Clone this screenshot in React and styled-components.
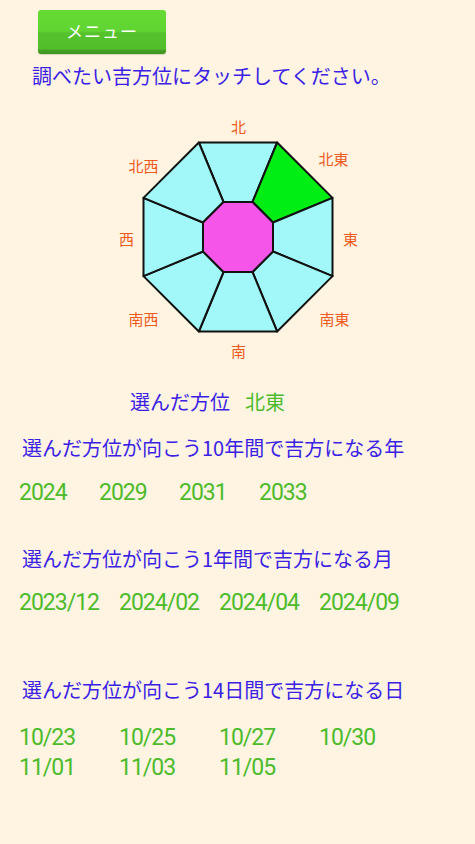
import React from "react"
import styled, { createGlobalStyle } from "styled-components"

const GlobalStyle = createGlobalStyle`
  html, body {
    margin: 0;
    padding: 0;
    background: #fff4e2;
  }
  body {
    font-family: "Noto Sans CJK JP", "Noto Sans", sans-serif;
  }
`

const Page = styled.div`
  width: 475px;
  min-height: 844px;
  background: #fff4e2;
  padding-top: 10px;
  box-sizing: border-box;
`

const MenuButton = styled.button`
  display: block;
  margin-left: 38px;
  width: 128px;
  height: 44px;
  border: none;
  border-radius: 3px;
  padding: 0 0 3px 0;
  background: linear-gradient(
    to bottom,
    #66da34 0%,
    #60d532 48%,
    #55c22d 52%,
    #52be2b 88%,
    #449f22 92%,
    #3f9420 100%
  );
  box-shadow: 0 1px 1px rgba(0, 0, 0, 0.15);
  color: #ffffff;
  font-family: "Noto Sans CJK JP", sans-serif;
  font-size: 17px;
  letter-spacing: 1px;
  cursor: pointer;
`

const Instruction = styled.p`
  margin: 10px 0 0 32px;
  font-size: 20px;
  line-height: 24px;
  color: #3a1fe4;
`

const CompassBox = styled.div`
  width: 260px;
  height: 256px;
  margin: 24px auto 0;
`

const Label = styled.text`
  font-family: "Noto Sans CJK JP", sans-serif;
  font-size: 15px;
  fill: #ee5a1c;
`

const SelectedRow = styled.div`
  display: flex;
  margin-top: 20px;
  padding-left: 130px;
  font-size: 20px;
  line-height: 28px;
  color: #3a1fe4;
`

const SelectedValue = styled.span`
  margin-left: 15px;
  color: #4cbb2c;
`

const Heading = styled.div`
  margin-top: ${(p) => p.$gap}px;
  padding-left: 22px;
  font-size: 20px;
  line-height: 28px;
  color: #3a1fe4;
`

const ValueGrid = styled.div`
  display: grid;
  grid-template-columns: repeat(4, ${(p) => p.$col}px);
  margin-top: ${(p) => p.$gap}px;
  padding-left: 19px;
  font-family: Roboto, "Noto Sans", sans-serif;
  font-size: 23px;
  letter-spacing: -1px;
  line-height: ${(p) => p.$line}px;
  color: #4cbb2c;
`

const directions = [
  { name: "北", fill: "#a2f8f8", lx: 0.5, ly: -111 },
  { name: "北東", fill: "#00ee14", lx: 95.5, ly: -79 },
  { name: "東", fill: "#a2f8f8", lx: 112.5, ly: 1 },
  { name: "南東", fill: "#a2f8f8", lx: 96.5, ly: 81 },
  { name: "南", fill: "#a2f8f8", lx: 0.5, ly: 113 },
  { name: "南西", fill: "#a2f8f8", lx: -94.5, ly: 81 },
  { name: "西", fill: "#a2f8f8", lx: -111.5, ly: 1 },
  { name: "北西", fill: "#a2f8f8", lx: -94.5, ly: -72 },
]

const pt = (r, deg) => {
  const a = (deg * Math.PI) / 180
  return [r * Math.sin(a), -r * Math.cos(a)]
}

function Compass() {
  const cx = 130
  const cy = 125
  const outer = 94.5 / Math.cos(Math.PI / 8)
  const inner = 35 / Math.cos(Math.PI / 8)
  const innerPts = []
  for (let i = 0; i < 8; i++) {
    const [x, y] = pt(inner, i * 45 - 22.5)
    innerPts.push(`${cx + x},${cy + y}`)
  }
  return (
    <CompassBox>
      <svg width="260" height="256" viewBox="0 0 260 256">
        {directions.map((d, i) => {
          const a1 = i * 45 - 22.5
          const a2 = i * 45 + 22.5
          const p = [pt(outer, a1), pt(outer, a2), pt(inner, a2), pt(inner, a1)]
            .map(([x, y]) => `${cx + x},${cy + y}`)
            .join(" ")
          return (
            <polygon
              key={d.name}
              points={p}
              fill={d.fill}
              stroke="#111"
              strokeWidth="2"
              strokeLinejoin="round"
            />
          )
        })}
        <polygon
          points={innerPts.join(" ")}
          fill="#f655ea"
          stroke="#111"
          strokeWidth="2"
          strokeLinejoin="round"
        />
        {directions.map((d) => (
          <Label
            key={d.name + "l"}
            x={cx + d.lx}
            y={cy + d.ly}
            textAnchor="middle"
            dominantBaseline="central"
          >
            {d.name}
          </Label>
        ))}
      </svg>
    </CompassBox>
  )
}

const years = ["2024", "2029", "2031", "2033"]
const months = ["2023/12", "2024/02", "2024/04", "2024/09"]
const days = ["10/23", "10/25", "10/27", "10/30", "11/01", "11/03", "11/05"]

export default function App() {
  return (
    <Page>
      <GlobalStyle />
      <MenuButton>メニュー</MenuButton>
      <Instruction>調べたい吉方位にタッチしてください。</Instruction>
      <Compass />
      <SelectedRow>
        選んだ方位
        <SelectedValue>北東</SelectedValue>
      </SelectedRow>

      <Heading $gap={18}>選んだ方位が向こう10年間で吉方になる年</Heading>
      <ValueGrid $gap={17} $col={80} $line={28}>
        {years.map((y) => (
          <span key={y}>{y}</span>
        ))}
      </ValueGrid>

      <Heading $gap={38}>選んだ方位が向こう1年間で吉方になる月</Heading>
      <ValueGrid $gap={16} $col={100} $line={28}>
        {months.map((m) => (
          <span key={m}>{m}</span>
        ))}
      </ValueGrid>

      <Heading $gap={59}>選んだ方位が向こう14日間で吉方になる日</Heading>
      <ValueGrid $gap={19} $col={100} $line={30}>
        {days.map((d) => (
          <span key={d}>{d}</span>
        ))}
      </ValueGrid>
    </Page>
  )
}
